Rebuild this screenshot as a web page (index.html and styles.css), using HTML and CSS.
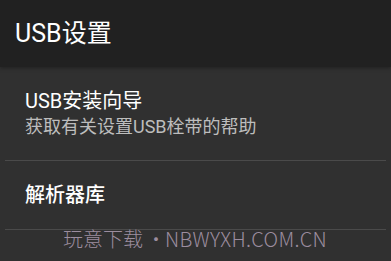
FILE: index.html
```html
<!DOCTYPE html>
<html lang="zh-CN">
<head>
<meta charset="utf-8">
<link rel="stylesheet" href="styles.css">
</head>
<body>
<div class="screen">
  <header class="appbar">
    <h1 class="appbar-title">USB设置</h1>
  </header>
  <main class="list">
    <div class="item item-two">
      <div class="item-title">USB安装向导</div>
      <div class="item-summary">获取有关设置USB栓带的帮助</div>
    </div>
    <div class="divider"></div>
    <div class="item item-one">
      <div class="item-title item-strong">解析器库</div>
    </div>
    <div class="divider"></div>
  </main>
  <div class="watermark">玩意下载<span class="dot">•</span><span class="wm-latin">NBWYXH.COM.CN</span></div>
</div>
</body>
</html>
```

FILE: styles.css
```css
html, body {
  margin: 0;
  padding: 0;
}
body {
  background: #303030;
  font-family: Roboto, "Noto Sans CJK SC", sans-serif;
  width: 391px;
  height: 261px;
  overflow: hidden;
}
.screen {
  position: relative;
  width: 391px;
  height: 261px;
}
.appbar {
  height: 67px;
  background: #212121;
  display: flex;
  align-items: center;
  padding-left: 15px;
  box-shadow: 0 1px 4px rgba(0, 0, 0, 0.35);
  position: relative;
  z-index: 1;
}
.appbar-title {
  margin: 0;
  font-size: 25px;
  font-weight: 400;
  color: #ffffff;
  line-height: 28px;
}
.list {
  display: flex;
  flex-direction: column;
}
.item {
  padding-left: 25px;
  display: flex;
  flex-direction: column;
}
.item-two {
  padding-top: 22px;
  padding-bottom: 20px;
}
.item-one {
  height: 68px;
  justify-content: center;
}
.item-title {
  font-size: 20px;
  line-height: 25px;
  color: #ffffff;
}
.item-strong {
  font-weight: 500;
}
.item-summary {
  font-size: 18px;
  line-height: 26px;
  color: #bdbdbd;
}
.divider {
  height: 1px;
  background: #4a4a4a;
  margin: 0 5px;
}
.watermark {
  position: absolute;
  left: 63px;
  top: 225px;
  font-family: "Noto Sans CJK SC", sans-serif;
  font-size: 20px;
  font-weight: 300;
  line-height: 28px;
  color: #9c8d9f;
  white-space: nowrap;
}
.dot {
  margin: 0 -1px 0 3px;
}
.wm-latin {
  letter-spacing: 0.3px;
}
```
